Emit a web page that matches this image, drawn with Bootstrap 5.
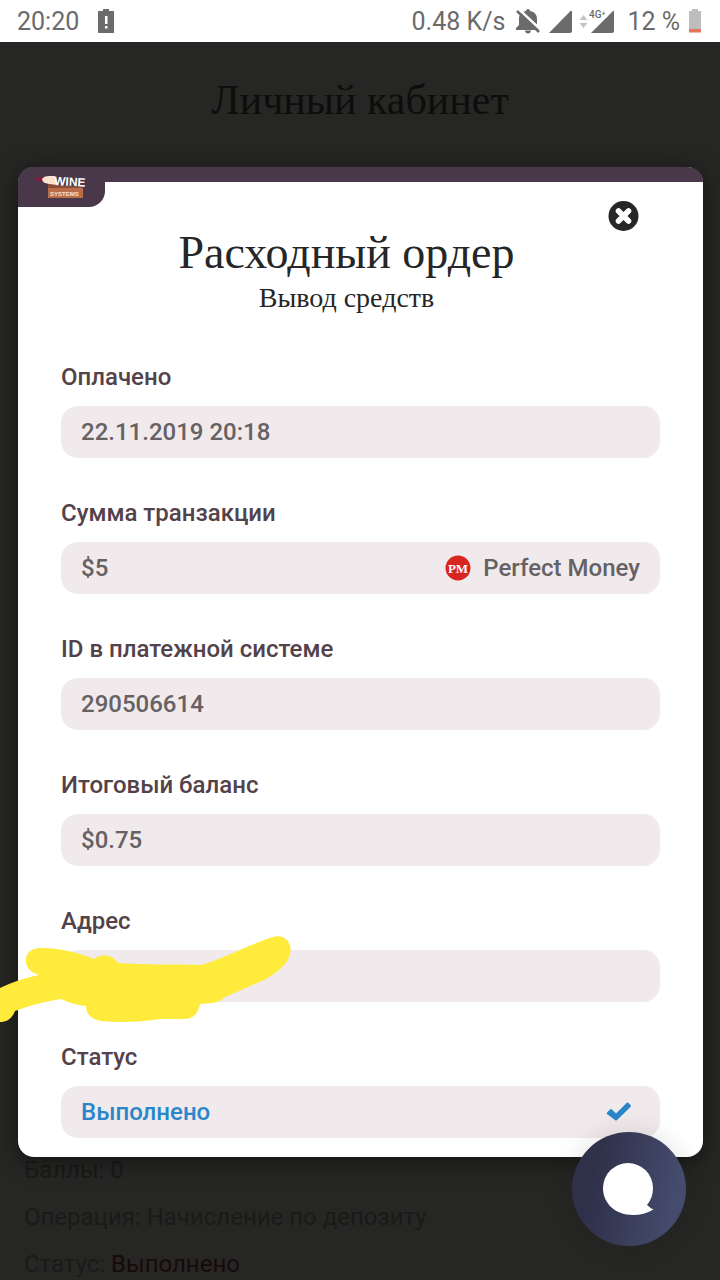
<!DOCTYPE html>
<html lang="ru">
<head>
<meta charset="utf-8">
<meta name="viewport" content="width=device-width, initial-scale=1">
<title>Расходный ордер</title>
<link href="https://cdn.jsdelivr.net/npm/bootstrap@5.3.0/dist/css/bootstrap.min.css" rel="stylesheet">
<style>
  body { font-family: Roboto, "Noto Sans", sans-serif; background: #262624; color: #1a1a19; overflow-x: hidden; }
  .device-bar { height: 42px; background: #fff; color: #6b6b6b; font-size: 25px; line-height: 42px; padding: 2px 18px 0 17px; }
  .serif { font-family: "Liberation Serif", serif; font-weight: 400; }
  .page-title { font-size: 42px; line-height: 48px; color: #0d0d0c; padding: 34px 0 43px; margin: 0; }
  .order { margin: 0 17px 0 18px; background: #fff; border-radius: 16px; box-shadow: 0 4px 22px rgba(0,0,0,.5); z-index: 1; }
  .order-strip { height: 15px; background: #49384a; border-radius: 16px 16px 0 0; }
  .brand-tab { top: 0; left: 0; width: 87px; height: 40px; background: #49384a; border-radius: 16px 0 16px 0; }
  .order-body { padding: 19px 43px; }
  .close-btn { width: 31px; height: 31px; margin-right: 21px; }
  .order-head { padding-right: 28px; margin-bottom: 45px; }
  .order-title { font-size: 46px; line-height: 42px; color: #262626; margin: 0 0 6px; }
  .order-sub { font-size: 28px; line-height: 36px; color: #262626; margin: 0; }
  .fields { gap: 39px; }
  .field-label { font-size: 24px; line-height: 32px; font-weight: 500; color: #54424a; margin-bottom: 13px; }
  .field-box { height: 52px; background: #f0eaec; border-radius: 17px; padding: 0 20px; }
  .field-box .form-control { font-size: 24px; line-height: 32px; font-weight: 500; color: #666163; min-width: 0; }
  .field-box .form-control.is-done { color: #2986c9; }
  .pay-name { font-size: 24px; line-height: 32px; font-weight: 500; color: #666163; }
  .check { margin-right: 8px; }
  .scribble { left: -61px; top: -16px; pointer-events: none; }
  .history { margin: -3px 0 0; padding: 0 24px; gap: 15px; font-size: 24px; line-height: 32px; }
  .history .done { color: #170a0b; }
  .chat-btn { right: 34px; bottom: 34px; width: 114px; height: 114px; z-index: 3; background: linear-gradient(100deg, #2f3049 20%, #444b6c 85%); box-shadow: 0 0 28px rgba(0,0,0,.12); }
</style>
</head>
<body>
<header class="device-bar d-flex align-items-center">
  <span>20:20</span>
  <svg class="ms-3" width="22" height="26" viewBox="0 0 22 26" aria-hidden="true"><path fill="#6b6b6b" d="M3 2h5V0h6v2h5v22H3z"/><path fill="#fff" d="M10 7h2.500v8H10zM10 17h2.500v2.500H10z"/></svg>
  <span class="ms-auto">0.48 K/s</span>
  <svg class="ms-2" width="30" height="28" viewBox="0 0 30 28" aria-hidden="true"><path fill="#6b6b6b" d="M15 1c1.500 0 2 1 2 2 5 1 7 4 7 8v6l3 3v2H3v-2l3-3v-6c0-4 2-7 7-8 0-1 .5-2 2-2zM12 22.500h6c0 4-6 4-6 0z"/><path stroke="#fff" stroke-width="2.500" d="M5.500 1L28 22"/><path stroke="#6b6b6b" stroke-width="2.500" d="M4 3l22 21"/></svg>
  <svg class="ms-1" width="68" height="28" viewBox="0 0 68 28" aria-hidden="true"><g fill="#6b6b6b"><path d="M2 25L23.500 3Q25 2 25 4v19q0 2-2 2zM44 25L66 3Q67 2 67 4v19q0 2-2 2z"/><path fill="#fff" d="M40 0h21v8L50 17h-10z"/><text x="42" y="10" font-family="Roboto, sans-serif" font-size="10" font-weight="500">4G⁺</text></g><path fill="#c4c4c4" d="M32.500 12l4-5 4 5zM32.500 15h8l-4 5z"/></svg>
  <span class="ms-2 ps-1">12 %</span>
  <svg class="ms-2" width="14" height="26" viewBox="0 0 14 26" aria-hidden="true"><path fill="#bdbdbd" d="M1 2h3V0h6v2h3v18H1z"/><path fill="#e0765a" d="M1 20h12v3.500H1z"/></svg>
</header>

<main>
  <h1 class="page-title serif text-center">Личный кабинет</h1>

  <section class="order position-relative" role="dialog" aria-labelledby="orderTitle">
    <div class="order-strip"></div>
    <div class="brand-tab position-absolute">
      <svg width="87" height="40" viewBox="0 0 87 40" role="img" aria-label="Wine Systems">
        <path fill="#8b1738" d="M17 11l8-1 3 2v4l-4-2-6 0z"/>
        <path fill="#8c4d39" d="M30 17l35 3v3H30z"/>
        <path fill="#b96d49" d="M30 21h35v10H30z"/>
        <path fill="#fbe3cd" d="M24 12q2-3 7-3l6 0 2 9-8-1q-7-1-7-5z"/>
        <text transform="rotate(3 36 18)" x="36" y="18" fill="#fff" font-family="Liberation Sans, sans-serif" font-weight="700" font-size="12">WINE</text>
        <text x="32" y="28.500" fill="#fbe3cd" font-family="Liberation Sans, sans-serif" font-weight="700" font-size="6">SYSTEMS</text>
      </svg>
    </div>

    <div class="order-body">
      <div class="d-flex justify-content-end">
        <button type="button" class="close-btn btn p-0 border-0 d-flex" aria-label="Закрыть">
          <svg width="31" height="31" viewBox="0 0 31 31"><circle cx="15.500" cy="15" r="15" fill="#262626"/><path d="M10.500 10l10 10M20.500 10l-10 10" stroke="#fff" stroke-width="5.600" stroke-linecap="round"/></svg>
        </button>
      </div>
      <div class="order-head text-center">
        <h2 class="order-title serif" id="orderTitle">Расходный ордер</h2>
        <p class="order-sub serif">Вывод средств</p>
      </div>

      <form class="fields d-flex flex-column">
        <div>
          <label class="field-label d-block" for="paid">Оплачено</label>
          <div class="field-box d-flex align-items-center"><input id="paid" class="form-control border-0 bg-transparent p-0" value="22.11.2019 20:18" readonly></div>
        </div>
        <div>
          <label class="field-label d-block" for="sum">Сумма транзакции</label>
          <div class="field-box d-flex align-items-center">
            <input id="sum" class="form-control border-0 bg-transparent p-0" value="$5" readonly>
            <svg class="flex-shrink-0" width="26" height="26" viewBox="0 0 26 26" aria-hidden="true"><circle cx="13" cy="13" r="12.500" fill="#d8251f"/><text x="13" y="17.500" text-anchor="middle" fill="#fff" font-family="Liberation Serif, serif" font-weight="700" font-size="13">PM</text></svg>
            <span class="pay-name text-nowrap ms-2 ps-1">Perfect Money</span>
          </div>
        </div>
        <div>
          <label class="field-label d-block" for="payId">ID в платежной системе</label>
          <div class="field-box d-flex align-items-center"><input id="payId" class="form-control border-0 bg-transparent p-0" value="290506614" readonly></div>
        </div>
        <div>
          <label class="field-label d-block" for="balance">Итоговый баланс</label>
          <div class="field-box d-flex align-items-center"><input id="balance" class="form-control border-0 bg-transparent p-0" value="$0.75" readonly></div>
        </div>
        <div>
          <label class="field-label d-block" for="address">Адрес</label>
          <div class="field-box d-flex align-items-center position-relative">
            <input id="address" class="form-control border-0 bg-transparent p-0" readonly>
            <svg class="scribble position-absolute" width="300" height="96" viewBox="0 934 300 96" aria-hidden="true">
              <path fill="#ffeb3b" d="M0 988Q16 980 39 975C29 972 25 966 26 958C28 950 34 948 42 948C60 948 76 952 94 959C102 953 113 955 118 963C145 965 175 964 201 965C225 958 248 945 273 937C285 933 293 944 290 954C287 965 277 973 264 980L225 997C219 1003 213 1003 200 1004C198 1014 193 1019 184 1019L161 1019C140 1022 120 1023 101 1021C91 1019 86 1014 86 1006Q74 1005 61 999Q36 1003 15 1011C12 1018 8 1022 0 1022z"/>
            </svg>
          </div>
        </div>
        <div>
          <label class="field-label d-block" for="status">Статус</label>
          <div class="field-box d-flex align-items-center">
            <input id="status" class="form-control is-done border-0 bg-transparent p-0" value="Выполнено" readonly>
            <svg class="check flex-shrink-0" width="26" height="22" viewBox="0 0 26 22" aria-hidden="true"><path d="M1 11.500l3-3q1-1 2 0l4 4L20.500 2q1-1 2 0l2 2q1 1 0 2L11 19q-1 1-2 0l-8-6q-.7-.8 0-1.500z" fill="#2986c9"/></svg>
          </div>
        </div>
      </form>
    </div>
  </section>

  <section class="history d-flex flex-column">
    <div>Баллы: 0</div>
    <div>Операция: Начисление по депозиту</div>
    <div>Статус: <span class="done">Выполнено</span></div>
  </section>
</main>

<button type="button" class="chat-btn btn border-0 rounded-circle p-0 position-fixed d-flex align-items-center justify-content-center" aria-label="Чат">
  <svg width="54" height="54" viewBox="0 0 54 54" aria-hidden="true"><path fill="#fff" d="M26 1a25 25 0 0 1 25 25q0 10-6 17 3 3 6.500 4.500Q42 53 31 53C14 53 1 42 1 26A25 25 0 0 1 26 1z"/></svg>
</button>
<script src="https://cdn.jsdelivr.net/npm/bootstrap@5.3.0/dist/js/bootstrap.bundle.min.js"></script>
</body>
</html>
